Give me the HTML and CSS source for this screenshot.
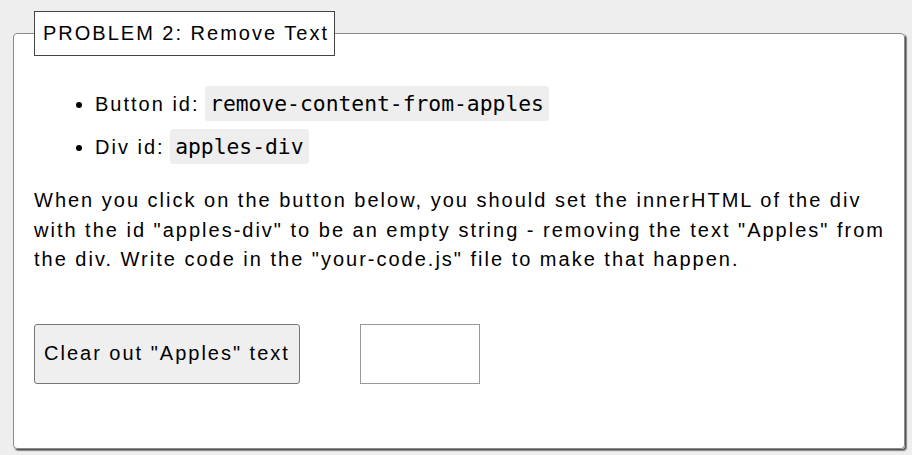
FILE: index.html
```html
<!DOCTYPE html>
<html>
<head>
<meta charset="utf-8">
<link rel="stylesheet" href="styles.css">
</head>
<body>
<fieldset class="problem">
  <legend class="problem-title">PROBLEM 2: Remove Text</legend>
  <ul class="ids">
    <li>Button id: <code>remove-content-from-apples</code></li>
    <li>Div id: <code>apples-div</code></li>
  </ul>
  <p class="desc">When you click on the button below, you should set the innerHTML of the div with the id "apples-div" to be an empty string - removing the text "Apples" from the div. Write code in the "your-code.js" file to make that happen.</p>
  <div class="controls">
    <button class="clear-btn">Clear out "Apples" text</button>
    <div class="apples-box"></div>
  </div>
</fieldset>
</body>
</html>
```

FILE: styles.css
```css
html, body {
  margin: 0;
  background: #eeeeee;
}
body {
  padding: 11px 7px 6px 13px;
  font-family: "Liberation Sans", Arial, sans-serif;
  font-size: 20px;
  letter-spacing: 2px;
  color: #000;
}
.problem {
  margin: 0;
  background: #fff;
  border: 1px solid #8a8a8a;
  border-radius: 4px;
  box-shadow: 1px 1px 1px #555, 2px 2px 1px #888;
  padding: 30px 12px 64px 20px;
}
.problem-title {
  border: 1px solid #444;
  background: #fff;
  padding: 9px 5px 10px 8px;
  margin-left: 0;
  font-size: 20px;
  line-height: 24px;
}
.ids {
  margin: 0 0 21px 0;
  padding-left: 61px;
}
.ids li {
  line-height: 35px;
  margin-bottom: 7px;
}
code {
  font-family: "DejaVu Sans Mono", monospace;
  font-size: 21.33px;
  letter-spacing: 0;
  background: #eeeeee;
  border-radius: 3px;
  padding: 5px 5px;
  margin-left: -2px;
}
.desc {
  margin: 0;
  line-height: 29.5px;
}
.controls {
  display: flex;
  gap: 60px;
  margin-top: 49px;
}
.clear-btn {
  font-family: inherit;
  font-size: 20px;
  letter-spacing: 2px;
  height: 60px;
  padding: 0 9px 0 9px;
  background: #efefef;
  border: 1px solid #767676;
  border-radius: 3px;
  color: #000;
}
.apples-box {
  width: 118px;
  height: 58px;
  border: 1px solid #999;
  background: #fff;
}
```
